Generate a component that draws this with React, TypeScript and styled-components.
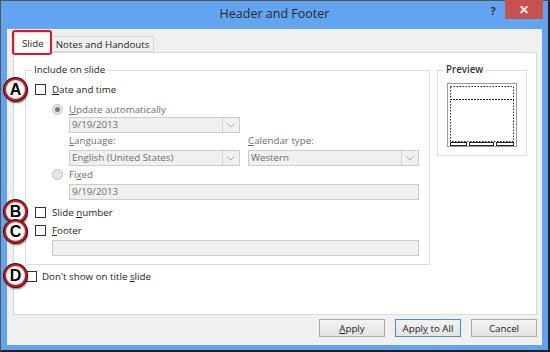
import { createGlobalStyle, styled } from "styled-components";

const GlobalStyle = createGlobalStyle`
  html, body { margin: 0; padding: 0; background: #fff; }
  body { font-family: "Open Sans", "Noto Sans", sans-serif; }
  * { box-sizing: border-box; }
`;

const Window = styled.div`
  position: relative;
  width: 550px;
  height: 352px;
  background: #62a4ef;
  border: 1px solid #555;
  border-right: 2px solid #222;
  border-bottom: 2px solid #222;
  display: flex;
  flex-direction: column;
`;

const TitleBar = styled.div`
  height: 28px;
  display: grid;
  grid-template-columns: 1fr auto 1fr;
  align-items: start;
`;

const Title = styled.div`
  grid-column: 2;
  padding-top: 4px;
  font-size: 12.5px;
  color: #2a2a2a;
`;

const Controls = styled.div`
  grid-column: 3;
  justify-self: end;
  display: flex;
  align-items: flex-start;
`;

const Help = styled.div`
  width: 24px;
  padding-top: 2px;
  font-size: 11px;
  font-weight: 700;
  color: #333;
  text-align: center;
`;

const Close = styled.div`
  width: 38px;
  height: 19px;
  margin-top: -1px;
  margin-right: 5px;
  background: #c75050;
  color: #fff;
  font-size: 12px;
  font-weight: 700;
  display: flex;
  align-items: center;
  justify-content: center;
`;

const Body = styled.div`
  flex: 1;
  margin: 0 6px 5px 6px;
  background: #f0f0f0;
  padding: 3px 5px 0 6px;
  display: flex;
  flex-direction: column;
  font-size: 9.75px;
  color: #1e1e1e;
`;

const TabStrip = styled.div`
  display: flex;
  align-items: flex-end;
  height: 20px;
  padding-left: 1px;
  position: relative;
`;

const Tab = styled.div<{ $active?: boolean }>`
  height: ${({ $active }) => ($active ? "21px" : "16px")};
  margin-bottom: ${({ $active }) => ($active ? "-1px" : "0")};
  padding: 0 ${({ $active }) => ($active ? "7px" : "4px")};
  background: ${({ $active }) => ($active ? "#fff" : "#f0f0f0")};
  border: 1px solid #d9d9d9;
  border-bottom: ${({ $active }) => ($active ? "none" : "1px solid #d9d9d9")};
  margin-left: ${({ $active }) => ($active ? "0" : "-1px")};
  display: flex;
  align-items: center;
  position: relative;
  z-index: ${({ $active }) => ($active ? 2 : 1)};
`;

const RedBox = styled.div`
  position: absolute;
  left: -3px;
  top: -3px;
  right: -1px;
  bottom: -2px;
  border: 2px solid #e3141b;
  border-radius: 3px;
`;

const Panel = styled.div`
  height: 263px;
  background: #fff;
  border: 1px solid #d9d9d9;
  padding: 10px 0 0 11px;
  display: flex;
  gap: 7px;
  align-items: flex-start;
`;

const LeftCol = styled.div`
  display: flex;
  flex-direction: column;
`;

const Group = styled.fieldset<{ $w: number; $h: number }>`
  margin: 0;
  width: ${({ $w }) => $w}px;
  height: ${({ $h }) => $h}px;
  border: 1px solid #dcdcdc;
  padding: 0 9px 0 9px;
  display: flex;
  flex-direction: column;
`;

const Legend = styled.legend<{ $bold?: boolean }>`
  padding: 0 2px;
  margin-left: -3px;
  line-height: 14px;
  font-weight: ${({ $bold }) => ($bold ? 600 : 400)};
  color: ${({ $bold }) => ($bold ? "#333" : "#1e1e1e")};
`;

const Row = styled.div<{ $mt: number; $indent?: number; $gap?: number }>`
  height: 14px;
  margin-top: ${({ $mt }) => $mt}px;
  margin-left: ${({ $indent }) => $indent ?? 0}px;
  display: flex;
  align-items: center;
  gap: ${({ $gap }) => $gap ?? 6}px;
  white-space: nowrap;
`;

const Check = styled.span`
  width: 11px;
  height: 11px;
  border: 1px solid #333;
  background: #fff;
  flex-shrink: 0;
`;

const Radio = styled.span<{ $on?: boolean }>`
  width: 11px;
  height: 11px;
  border-radius: 50%;
  border: 1px solid #c4c4c4;
  background: #e6e6e6;
  flex-shrink: 0;
  display: flex;
  align-items: center;
  justify-content: center;
  &::after {
    content: "";
    width: 5px;
    height: 5px;
    border-radius: 50%;
    background: ${({ $on }) => ($on ? "#7a7a7a" : "transparent")};
  }
`;

const Dim = styled.span`
  color: #6d6d6d;
`;

const Field = styled.div<{ $w: number; $mt: number; $indent: number }>`
  width: ${({ $w }) => $w}px;
  height: 16px;
  margin-top: ${({ $mt }) => $mt}px;
  margin-left: ${({ $indent }) => $indent}px;
  background: #f0f0f0;
  border: 1px solid #cccccc;
  color: #6d6d6d;
  display: flex;
  align-items: center;
  padding-left: 2px;
  line-height: 14px;
`;

const ComboText = styled.span`
  flex: 1;
`;

const Arrow = styled.span`
  width: 17px;
  height: 14px;
  border-left: 1px solid #d6d6d6;
  display: flex;
  align-items: center;
  justify-content: center;
`;

const LangGrid = styled.div`
  margin-top: 1px;
  margin-left: 34px;
  display: grid;
  grid-template-columns: 171px 171px;
  column-gap: 8px;
  row-gap: 2px;
`;

const Label = styled.div`
  height: 14px;
  line-height: 14px;
  color: #6d6d6d;
`;

const Thumb = styled.svg`
  margin-top: 6px;
  display: block;
`;

const ButtonBar = styled.div`
  margin-top: 4px;
  display: flex;
  justify-content: flex-end;
  gap: 10px;
`;

const Button = styled.div<{ $primary?: boolean }>`
  width: 66px;
  height: 18px;
  border: 1px solid ${({ $primary }) => ($primary ? "#4a90d0" : "#adadad")};
  background: linear-gradient(#f2f2f2, #e4e4e4);
  display: flex;
  align-items: center;
  justify-content: center;
  color: #1e1e1e;
  white-space: pre;
`;

const Badge = styled.div<{ $x: number; $y: number }>`
  position: absolute;
  left: ${({ $x }) => $x}px;
  top: ${({ $y }) => $y}px;
  width: 23px;
  height: 23px;
  border-radius: 50%;
  background: #fff;
  border: 2px solid #d8141c;
  box-shadow: 0 0 0 1px #1a1a1a, 1px 2px 2px rgba(0, 0, 0, 0.55);
  display: flex;
  align-items: center;
  justify-content: center;
  font-family: "Liberation Sans", Arial, sans-serif;
  font-weight: 700;
  font-size: 16px;
  color: #000;
  z-index: 5;
`;

const Chevron = () => (
  <svg width="8" height="5" viewBox="0 0 8 5">
    <path d="M0.5 0.5 L4 4 L7.5 0.5" fill="none" stroke="#a8a8a8" strokeWidth="1" />
  </svg>
);

const Combo = ({ text, w, mt, indent }: { text: string; w: number; mt: number; indent: number }) => (
  <Field $w={w} $mt={mt} $indent={indent}>
    <ComboText>{text}</ComboText>
    <Arrow>
      <Chevron />
    </Arrow>
  </Field>
);

const Preview = () => (
  <Thumb width="70" height="64" viewBox="0 0 70 64">
    <rect x="0.5" y="0.5" width="69" height="63" fill="#fff" stroke="#9a9a9a" />
    <rect x="3.5" y="3.5" width="63" height="13" fill="none" stroke="#222" strokeDasharray="1.5 1.5" />
    <rect x="3.5" y="16.5" width="63" height="42" fill="none" stroke="#222" strokeDasharray="1.5 1.5" />
    <rect x="3.5" y="59.5" width="16" height="3" fill="#fff" stroke="#222" />
    <rect x="22.5" y="59.5" width="24" height="3" fill="#fff" stroke="#222" />
    <rect x="49.5" y="59.5" width="17" height="3" fill="#fff" stroke="#222" />
  </Thumb>
);

export default function App() {
  return (
    <>
      <GlobalStyle />
      <Window>
        <TitleBar>
          <Title>Header and Footer</Title>
          <Controls>
            <Help>?</Help>
            <Close>✕</Close>
          </Controls>
        </TitleBar>
        <Body>
          <TabStrip>
            <Tab $active>
              Slide
              <RedBox />
            </Tab>
            <Tab>Notes and Handouts</Tab>
          </TabStrip>
          <Panel>
            <LeftCol>
              <Group $w={405} $h={202}>
                <Legend>Include on slide</Legend>
                <Row $mt={5}>
                  <Check />
                  <span><u>D</u>ate and time</span>
                </Row>
                <Row $mt={6} $indent={17}>
                  <Radio $on />
                  <Dim><u>U</u>pdate automatically</Dim>
                </Row>
                <Combo text="9/19/2013" w={171} mt={1} indent={34} />
                <LangGrid>
                  <Label><u>L</u>anguage:</Label>
                  <Label><u>C</u>alendar type:</Label>
                  <Combo text="English (United States)" w={171} mt={0} indent={0} />
                  <Combo text="Western" w={171} mt={0} indent={0} />
                </LangGrid>
                <Row $mt={1} $indent={17}>
                  <Radio />
                  <Dim>Fi<u>x</u>ed</Dim>
                </Row>
                <Field $w={350} $mt={3} $indent={34}>9/19/2013</Field>
                <Row $mt={5}>
                  <Check />
                  <span>Slide <u>n</u>umber</span>
                </Row>
                <Row $mt={4}>
                  <Check />
                  <span><u>F</u>ooter</span>
                </Row>
                <Field $w={367} $mt={3} $indent={17} />
              </Group>
              <Row $mt={4} $indent={1} $gap={5}>
                <Check />
                <span>Don't show on title <u>s</u>lide</span>
              </Row>
            </LeftCol>
            <Group $w={89} $h={93}>
              <Legend $bold>Preview</Legend>
              <Preview />
            </Group>
          </Panel>
          <ButtonBar>
            <Button><span><u>A</u>pply</span></Button>
            <Button $primary><span>Appl<u>y</u> to All</span></Button>
            <Button><span>Cancel</span></Button>
          </ButtonBar>
        </Body>
        <Badge $x={3} $y={77}>A</Badge>
        <Badge $x={3} $y={199}>B</Badge>
        <Badge $x={3} $y={219}>C</Badge>
        <Badge $x={3} $y={263}>D</Badge>
      </Window>
    </>
  );
}
